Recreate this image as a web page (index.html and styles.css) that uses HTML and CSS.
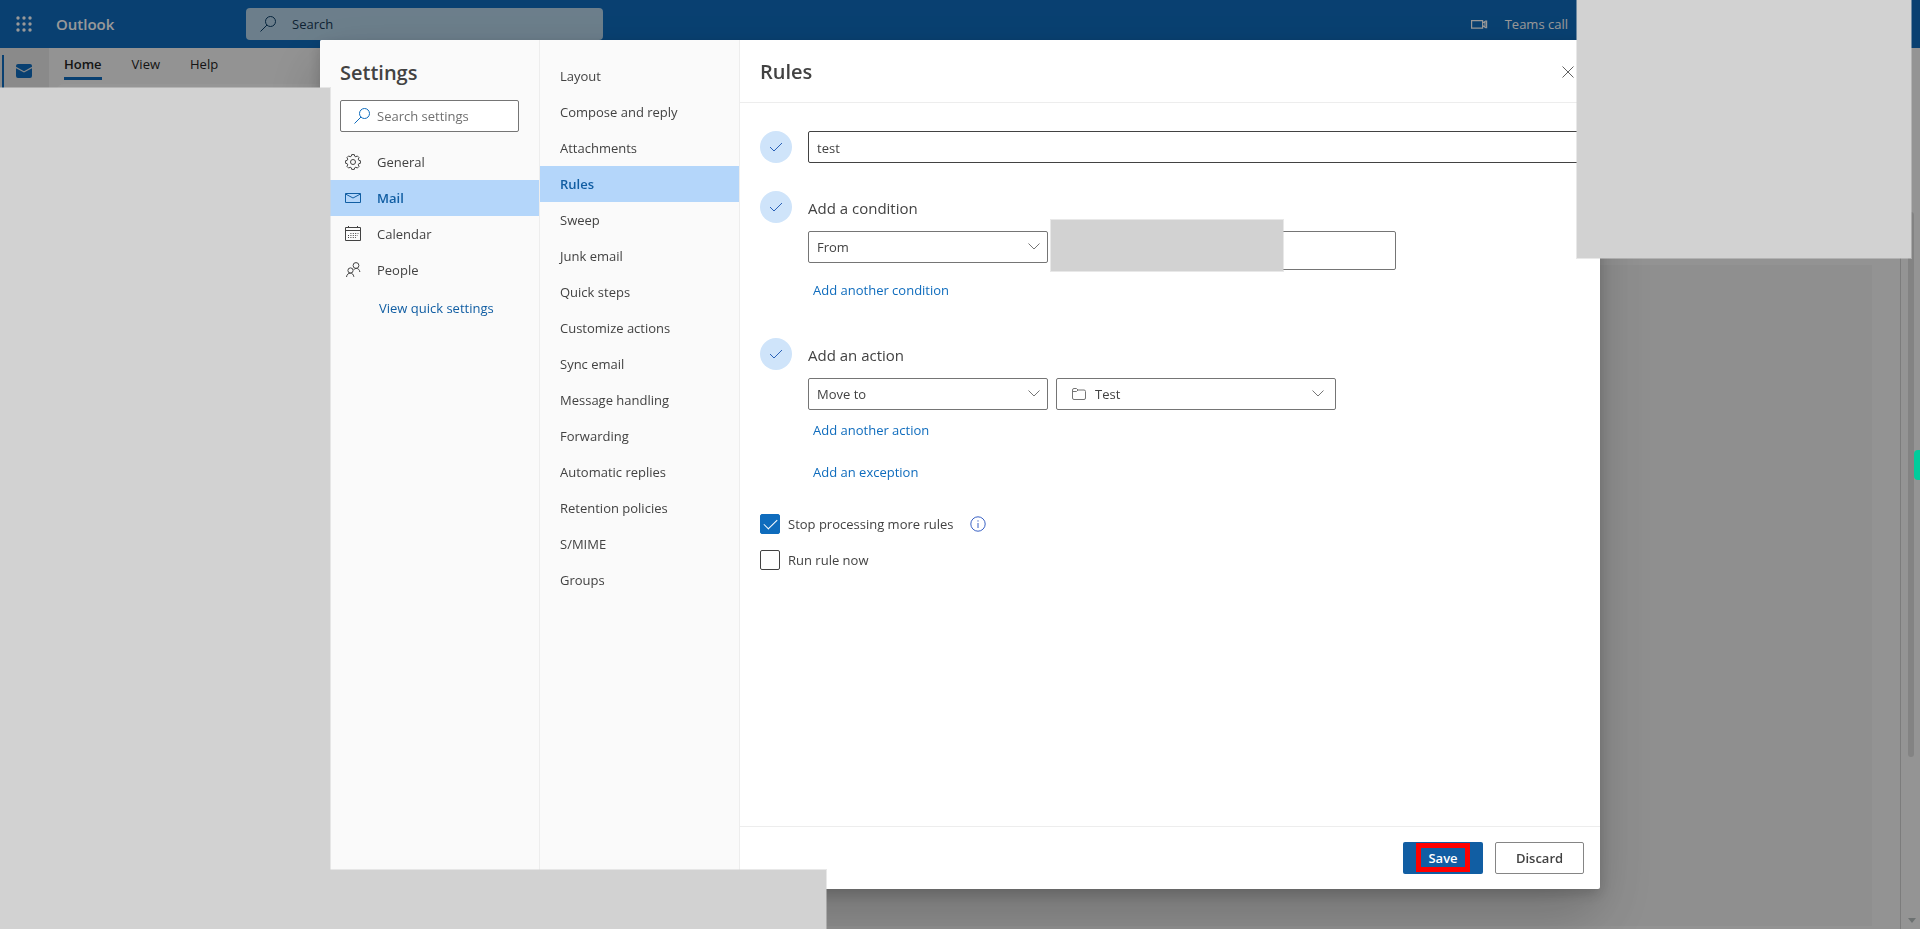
FILE: index.html
```html
<!DOCTYPE html>
<html lang="en">
<head>
<meta charset="utf-8">
<title>Settings - Outlook</title>
<link rel="stylesheet" href="styles.css">
</head>
<body>
<div class="app">
  <header class="topbar">
    <button class="launcher" aria-label="App launcher">
      <svg width="16" height="16" viewBox="0 0 16 16" fill="currentColor"><circle cx="2" cy="2" r="1.7"/><circle cx="8" cy="2" r="1.7"/><circle cx="14" cy="2" r="1.7"/><circle cx="2" cy="8" r="1.7"/><circle cx="8" cy="8" r="1.7"/><circle cx="14" cy="8" r="1.7"/><circle cx="2" cy="14" r="1.7"/><circle cx="8" cy="14" r="1.7"/><circle cx="14" cy="14" r="1.7"/></svg>
    </button>
    <span class="brand">Outlook</span>
    <div class="topsearch">
      <svg width="18" height="18" viewBox="0 0 18 18" fill="none" stroke="currentColor"><circle cx="11.500" cy="6.500" r="5"/><path d="M8 10 1.500 16.500"/></svg>
      <input type="text" placeholder="Search" aria-label="Search">
    </div>
    <button class="teams">
      <svg width="18" height="10" viewBox="0 0 18 10" fill="none" stroke="currentColor" stroke-width="1.200"><path d="M1.600 1.600h11v7.500h-11zM12.600 4l3-2h1v6.600h-1l-3-2M15 2.500v5.500"/></svg>
      Teams call
    </button>
  </header>
  <div class="workspace">
    <nav class="rail" aria-label="Apps">
      <a href="#" class="rail-item" aria-label="Mail">
        <svg width="16" height="14" viewBox="0 0 16 14" fill="#0f6cbd"><path d="M2 0h12a2 2 0 0 1 2 2v.8L8 7.200 0 2.800V2a2 2 0 0 1 2-2z"/><path d="M0 4.200 8 8.500l8-4.300V12a2 2 0 0 1-2 2H2a2 2 0 0 1-2-2z"/></svg>
      </a>
    </nav>
    <div class="mailview">
      <div class="tabs">
        <button class="tab current">Home</button>
        <button class="tab">View</button>
        <button class="tab">Help</button>
      </div>
      <div class="ribbon"></div>
      <div class="reading"></div>
    </div>
    <div class="sidebar">
      <div class="thumb"></div>
      <svg class="down" width="8" height="5" viewBox="0 0 8 5"><path d="M0 0h8L4 5z" fill="currentColor"/></svg>
    </div>
  </div>
</div>

<div class="backdrop">
  <div class="dialog" role="dialog" aria-label="Settings">
    <div class="pane categories">
      <h2>Settings</h2>
      <div class="findbox">
        <svg width="18" height="18" viewBox="0 0 18 18" fill="none" stroke="currentColor"><circle cx="11.500" cy="6.500" r="5"/><path d="M8 10 1.500 16.500"/></svg>
        <input type="text" placeholder="Search settings" aria-label="Search settings">
      </div>
      <nav class="catlist" aria-label="Categories">
        <a href="#" class="cat">
          <svg width="16" height="16" viewBox="-8 -8 16 16" fill="none" stroke="currentColor"><circle r="2.500"/><path stroke-linejoin="round" d="M7.400 1.300 5.800 1.700 5.200 2.900 6.100 4.300 4.300 6.100 2.900 5.200 1.700 5.800 1.300 7.400H-1.300L-1.700 5.800-2.900 5.200-4.300 6.100-6.100 4.300-5.200 2.900-5.800 1.700-7.400 1.300V-1.300L-5.800-1.700-5.200-2.900-6.100-4.300-4.300-6.100-2.900-5.200-1.700-5.800-1.300-7.400H1.300L1.700-5.800 2.900-5.200 4.300-6.100 6.100-4.300 5.200-2.900 5.800-1.700 7.400-1.300z"/></svg>
          General</a>
        <a href="#" class="cat selected">
          <svg width="16" height="16" viewBox="0 0 16 16" fill="none" stroke="currentColor"><path d="M.5 3.500h15v9H.5zM.5 4 8 8l7.500-4"/></svg>
          Mail</a>
        <a href="#" class="cat">
          <svg width="16" height="16" viewBox="0 0 16 16" fill="none" stroke="currentColor"><path d="M.5 1.500h15v13H.5zM.5 4.500h15M3.500 0v2M12.500 0v2"/><path stroke-dasharray="1 1.400" d="M5.400 7.500h8M3 9.500h10M3 11.500h8"/></svg>
          Calendar</a>
        <a href="#" class="cat">
          <svg width="16" height="16" viewBox="0 0 16 16" fill="none" stroke="currentColor"><circle cx="11" cy="3.500" r="2.900"/><circle cx="5.500" cy="8.500" r="2.600"/><path d="M1.500 15c.3-2.500 1.800-3.900 4-3.900 1.600 0 2.800 1.100 3.400 3.700M8.800 7.800c.6-.9 1.400-1.400 2.400-1.400 2 0 3.300 1.300 3.700 3.600"/></svg>
          People</a>
        <a href="#" class="quick">View quick settings</a>
      </nav>
    </div>
    <nav class="pane sections" aria-label="Mail settings">
      <a href="#" class="section">Layout</a>
      <a href="#" class="section">Compose and reply</a>
      <a href="#" class="section">Attachments</a>
      <a href="#" class="section selected">Rules</a>
      <a href="#" class="section">Sweep</a>
      <a href="#" class="section">Junk email</a>
      <a href="#" class="section">Quick steps</a>
      <a href="#" class="section">Customize actions</a>
      <a href="#" class="section">Sync email</a>
      <a href="#" class="section">Message handling</a>
      <a href="#" class="section">Forwarding</a>
      <a href="#" class="section">Automatic replies</a>
      <a href="#" class="section">Retention policies</a>
      <a href="#" class="section">S/MIME</a>
      <a href="#" class="section">Groups</a>
    </nav>
    <main class="detail">
      <div class="titlebar">
        <h2>Rules</h2>
        <button class="close" aria-label="Close"><svg width="12" height="12" viewBox="0 0 12 12" stroke="currentColor"><path d="M.5.5l11 11M11.500.5l-11 11"/></svg></button>
      </div>
      <form class="rule">
        <section class="step">
          <span class="done"><svg width="14" height="10" viewBox="0 0 14 10" fill="none" stroke="currentColor"><path d="M1 5l4 4 8-8"/></svg></span>
          <input class="name" type="text" value="test" aria-label="Rule name">
        </section>
        <section class="step">
          <span class="done"><svg width="14" height="10" viewBox="0 0 14 10" fill="none" stroke="currentColor"><path d="M1 5l4 4 8-8"/></svg></span>
          <div class="body conditions">
            <h3 id="cond">Add a condition</h3>
            <div class="fields">
              <div class="picker">
                <select aria-labelledby="cond"><option>From</option></select>
                <svg width="12" height="7" viewBox="0 0 12 7" fill="none" stroke="currentColor"><path d="M.5.5 6 6 11.500.5"/></svg>
              </div>
              <div class="people">
                <input type="text" aria-label="Sender">
                <div class="mask mask-sender"></div>
              </div>
            </div>
            <a href="#" class="more">Add another condition</a>
          </div>
        </section>
        <section class="step">
          <span class="done"><svg width="14" height="10" viewBox="0 0 14 10" fill="none" stroke="currentColor"><path d="M1 5l4 4 8-8"/></svg></span>
          <div class="body">
            <h3 id="act">Add an action</h3>
            <div class="fields">
              <div class="picker">
                <select aria-labelledby="act"><option>Move to</option></select>
                <svg width="12" height="7" viewBox="0 0 12 7" fill="none" stroke="currentColor"><path d="M.5.5 6 6 11.500.5"/></svg>
              </div>
              <div class="picker folder">
                <svg class="lead" width="14" height="12" viewBox="0 0 14 12" fill="none" stroke="currentColor"><path d="M.5 2A1.500 1.500 0 0 1 2 .5h2.500L6 2h6a1.500 1.500 0 0 1 1.500 1.500V10a1.500 1.500 0 0 1-1.500 1.500H2A1.500 1.500 0 0 1 .5 10zM.5 3.500h4L6 2"/></svg>
                <select aria-label="Folder"><option>Test</option></select>
                <svg width="12" height="7" viewBox="0 0 12 7" fill="none" stroke="currentColor"><path d="M.5.5 6 6 11.500.5"/></svg>
              </div>
            </div>
            <a href="#" class="more">Add another action</a>
            <a href="#" class="more exception">Add an exception</a>
          </div>
        </section>
        <div class="checks">
          <div class="check">
            <input type="checkbox" id="stop" checked><label for="stop">Stop processing more rules</label>
            <button type="button" class="info" aria-label="More information"><svg width="16" height="16" viewBox="0 0 16 16" fill="none" stroke="currentColor"><circle cx="8" cy="8" r="7.200"/><path d="M8 7v5M8 4.300v1.300"/></svg></button>
          </div>
          <div class="check">
            <input type="checkbox" id="run"><label for="run">Run rule now</label>
          </div>
        </div>
      </form>
      <footer class="actions">
        <button class="save">Save<span class="marker"></span></button>
        <button class="discard">Discard</button>
      </footer>
    </main>
  </div>
</div>
<div class="mask mask-left"></div>
<div class="mask mask-bottom"></div>
<div class="mask mask-right"></div>
<div class="flag"></div>
</body>
</html>
```
FILE: styles.css
```css
* { box-sizing: border-box; }
body {
  margin: 0;
  font: 13px/20px "Open Sans", "Noto Sans", sans-serif;
  color: #424242;
  overflow: hidden;
}
button, input, select { font: inherit; color: inherit; }
button { border: 0; background: none; padding: 0; }
a { text-decoration: none; color: inherit; }
h2, h3 { margin: 0; }
svg { flex: none; }

.app { height: 100vh; display: flex; flex-direction: column; }
.topbar {
  height: 48px;
  flex: none;
  display: flex;
  align-items: center;
  background: #0f6cbd;
  color: #fff;
}
.launcher { width: 48px; height: 48px; }
.launcher svg { display: block; margin-left: 16px; }
.brand { width: 190px; padding-left: 8px; font-size: 15px; font-weight: 600; }
.topsearch {
  width: 357px;
  height: 32px;
  margin-left: 8px;
  padding-left: 13px;
  display: flex;
  align-items: center;
  gap: 15px;
  border-radius: 4px;
  background: #b4d3e8;
  color: #0b3d66;
}
.topsearch input, .findbox input { border: 0; padding: 0; background: none; min-width: 0; flex: 1; }
.topsearch input::placeholder { color: #173a57; }
.teams { margin-left: auto; margin-right: 352px; display: flex; align-items: center; gap: 17px; }

.workspace { flex: 1; display: flex; background: #f5f5f5; }
.rail { width: 49px; background: #e6e6e6; }
.rail-item {
  display: flex;
  align-items: center;
  height: 44px;
  padding: 0 0 12px 12px;
  border-left: 2px solid #0f6cbd;
  margin: 7px 0 0 2px;
}
.mailview { flex: 1; display: flex; flex-direction: column; }
.tabs { display: flex; gap: 30px; padding: 4px 15px; }
.tab { height: 28px; padding-bottom: 2px; border-bottom: 3px solid transparent; color: #242424; }
.tab.current { border-color: #0f6cbd; font-weight: 600; }
.ribbon { height: 173px; margin: 0 8px; border-radius: 6px; background: #fafafa; }
.reading { flex: 1; margin: 8px 28px 3px 8px; background: #efefef; }
.sidebar {
  width: 20px;
  padding: 164px 5px 6px 7px;
  border-left: 1px solid #cfcfcf;
  background: #f7f7f7;
  display: flex;
  flex-direction: column;
  justify-content: space-between;
}
.thumb { width: 6px; height: 545px; border-radius: 3px; background: #dadada; }
.down { color: #b5bcbc; }

.backdrop {
  position: fixed;
  inset: 0;
  display: flex;
  justify-content: center;
  padding: 40px;
  background: rgba(0, 0, 0, 0.4);
}
.dialog {
  width: 100%;
  max-width: 1280px;
  display: flex;
  border-radius: 2px;
  overflow: hidden;
  background: #fff;
  box-shadow: 0 26px 58px rgba(0, 0, 0, 0.22), 0 5px 14px rgba(0, 0, 0, 0.18);
}
.pane { background: #fafafa; border-right: 1px solid #ededed; }
h2 { font-size: 20px; line-height: 28px; font-weight: 600; }
.categories { width: 220px; padding-top: 19px; }
.categories h2 { padding-left: 20px; }
.findbox {
  display: flex;
  align-items: center;
  gap: 6px;
  height: 32px;
  margin: 13px 20px 12px;
  padding: 0 12px;
  border: 1px solid #757575;
  border-radius: 2px;
  background: #fff;
  color: #0f6cbd;
}
.findbox input::placeholder { color: #707070; }
.cat { display: flex; align-items: center; gap: 16px; height: 36px; padding-left: 25px; }
.selected { background: #b4d6fa; color: #115ea3; font-weight: 600; }
.quick { display: block; padding: 10px 0 0 59px; color: #115ea3; }
.sections { width: 200px; padding-top: 18px; }
.section { display: block; padding: 8px 20px; }

.detail { flex: 1; display: flex; flex-direction: column; min-width: 0; }
.titlebar {
  height: 63px;
  flex: none;
  display: flex;
  align-items: center;
  justify-content: space-between;
  padding: 2px 26px 0 20px;
  border-bottom: 1px solid #ededed;
}
.close { color: #616161; }
.close svg { display: block; }
.rule { flex: 1; padding: 28px 16px 0 20px; }
.step { display: flex; gap: 16px; margin-bottom: 28px; }
.done {
  width: 32px;
  height: 32px;
  flex: none;
  display: flex;
  align-items: center;
  justify-content: center;
  border-radius: 50%;
  background: #cfe4fa;
  color: #2b62b8;
}
.name, .people input, select {
  width: 100%;
  height: 32px;
  padding: 0 8px;
  border: 1px solid #757575;
  border-radius: 2px;
  background: #fff;
}
.name { padding-top: 2px; border-color: #424242; }
.body { flex: 1; display: flex; flex-direction: column; align-items: flex-start; }
.conditions { padding-bottom: 10px; }
h3 { font-size: 15px; font-weight: 400; line-height: 24px; padding: 5px 0 11px; }
.fields { display: flex; gap: 8px; }
.picker { position: relative; width: 240px; }
.picker select { appearance: none; }
.picker svg { position: absolute; right: 8px; top: 12px; color: #757575; }
.folder { width: 280px; }
.folder select { padding-left: 38px; }
.folder svg { right: 12px; }
.folder .lead { left: 16px; top: 10px; }
.people { position: relative; width: 340px; }
.people input { height: 39px; display: block; }
.more { margin: 10px 5px 0; color: #0f6cbd; }
.exception { margin-top: 22px; }
.checks { display: flex; flex-direction: column; gap: 16px; padding-top: 4px; }
.check { display: flex; align-items: center; height: 20px; }
.check input {
  appearance: none;
  width: 20px;
  height: 20px;
  margin: 0 8px 0 0;
  border: 1px solid #424242;
  border-radius: 2px;
}
.check input:checked {
  border-color: #0f6cbd;
  background: #0f6cbd;
}
.check input:checked::before {
  content: "";
  display: block;
  width: 12px;
  height: 6px;
  margin: 4px 0 0 3px;
  border: solid #fff;
  border-width: 0 0 1px 1px;
  transform: rotate(-45deg);
}
.info { margin-left: 16px; color: #3a62c4; }
.info svg { display: block; }
.actions {
  display: flex;
  justify-content: flex-end;
  gap: 12px;
  padding: 15px 16px;
  border-top: 1px solid #ededed;
}
.actions button { height: 32px; border-radius: 2px; font-weight: 600; }
.actions .save { position: relative; width: 80px; background: #115ea3; color: #fff; }
.marker { position: absolute; inset: 1px 13px 2px; border: 5px solid #f00; }
.actions .discard { width: 89px; border: 1px solid #858585; }

.mask { position: absolute; background: #d2d2d2; box-shadow: 0 0 0 1px rgba(210, 210, 210, 0.5); }
.mask-sender { left: -5px; top: -11px; width: 232px; height: 51px; }
.mask-left { left: 0; top: 88px; bottom: 0; width: 330px; }
.mask-bottom { left: 0; bottom: 0; width: 826px; height: 59px; }
.mask-right { right: 9px; top: 0; width: 334px; height: 258px; }
.flag { position: absolute; right: 0; top: 450px; width: 6px; height: 30px; border-radius: 4px 0 0 4px; background: #00cc9c; }
```
